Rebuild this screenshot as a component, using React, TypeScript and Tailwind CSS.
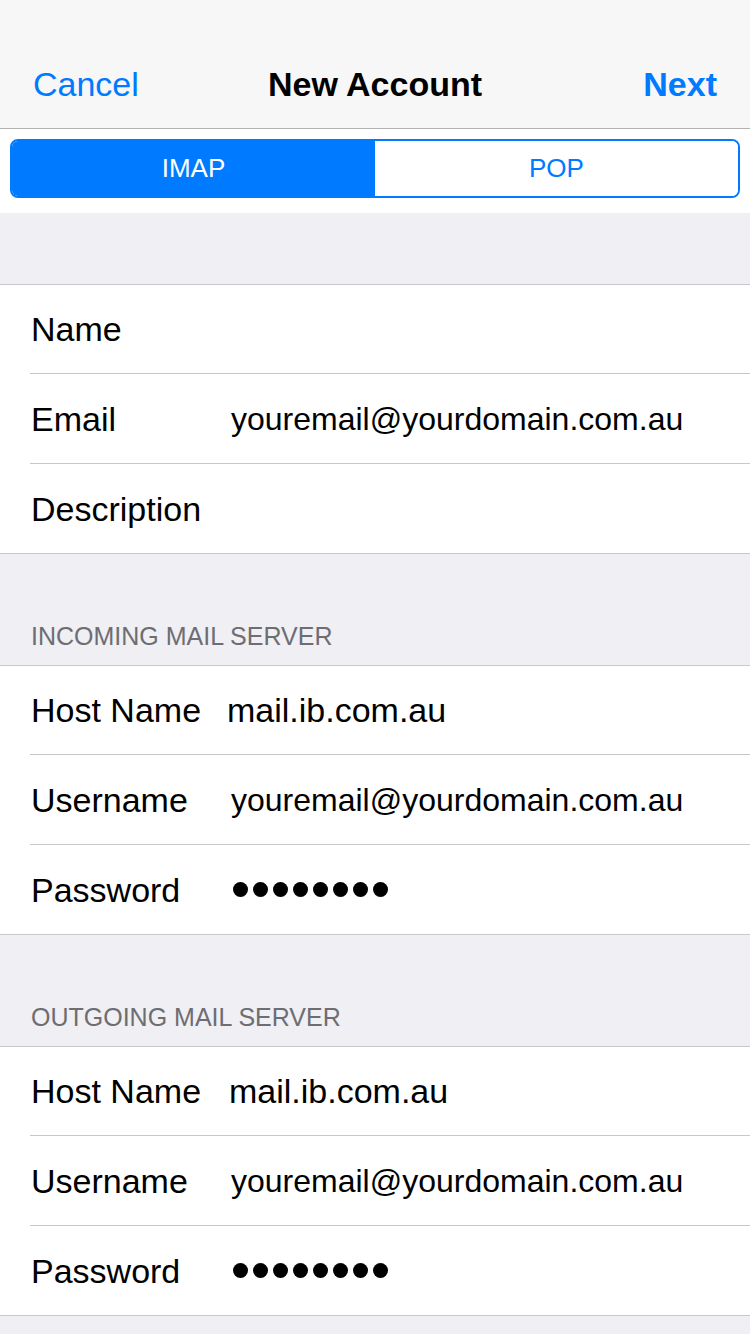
import React from "react";

const font = { fontFamily: '"Liberation Sans", Arial, sans-serif' };

function Dots() {
  return (
    <div className="flex gap-[5px]">
      {Array.from({ length: 8 }).map((_, i) => (
        <div key={i} className="w-[15px] h-[15px] rounded-full bg-black" />
      ))}
    </div>
  );
}

type Row = { label: string; value?: React.ReactNode; valueX?: number; small?: boolean };

function Group({ rows }: { rows: Row[] }) {
  return (
    <div className="bg-white border-t border-b border-[#c8c7cc]">
      {rows.map((r, i) => (
        <div key={i} className={i > 0 ? "ml-[30px] border-t border-[#c8c7cc]" : "ml-[30px]"}>
          <div className={`${i === 0 ? "h-[88px]" : "h-[89px]"} flex items-center relative`}>
            <span className="pl-[1px] text-[34px] text-black leading-none">{r.label}</span>
            {r.value !== undefined && (
              <div
                className={`absolute top-0 bottom-0 flex items-center text-black leading-none ${
                  r.small ? "text-[32px]" : "text-[34px]"
                }`}
                style={{ left: (r.valueX ?? 231) - 30 }}
              >
                {r.value}
              </div>
            )}
          </div>
        </div>
      ))}
    </div>
  );
}

function Header({ text }: { text: string }) {
  return (
    <div className="h-[111px] bg-[#efeff4] flex items-end pb-[16px] pl-[31px]">
      <span className="text-[25px] text-[#6d6d72] leading-none">{text}</span>
    </div>
  );
}

export default function App() {
  return (
    <div className="w-[750px] h-[1334px] bg-[#efeff4] overflow-hidden" style={font}>
      <div className="h-[128px] bg-[#f7f7f7] border-b border-[#b2b2b2] box-content flex items-end">
        <div className="h-[88px] w-full flex items-center justify-between relative px-[33px]">
          <span className="text-[34px] text-[#007aff] leading-none">Cancel</span>
          <span className="absolute left-0 right-0 text-center text-[34px] font-bold text-black leading-none pointer-events-none">
            New Account
          </span>
          <span className="text-[34px] font-bold text-[#007aff] leading-none">Next</span>
        </div>
      </div>
      <div className="h-[84px] bg-white pt-[10px] px-[10px]">
        <div className="h-[59px] border-2 border-[#007aff] rounded-[8px] flex overflow-hidden">
          <div className="flex-1 bg-[#007aff] flex items-center justify-center text-white text-[26px]">IMAP</div>
          <div className="flex-1 bg-white flex items-center justify-center text-[#007aff] text-[26px]">POP</div>
        </div>
      </div>
      <div className="h-[71px]" />
      <Group
        rows={[
          { label: "Name" },
          { label: "Email", value: "youremail@yourdomain.com.au", small: true },
          { label: "Description" },
        ]}
      />
      <Header text="INCOMING MAIL SERVER" />
      <Group
        rows={[
          { label: "Host Name", value: "mail.ib.com.au", valueX: 227 },
          { label: "Username", value: "youremail@yourdomain.com.au", small: true },
          { label: "Password", value: <Dots />, valueX: 233 },
        ]}
      />
      <Header text="OUTGOING MAIL SERVER" />
      <Group
        rows={[
          { label: "Host Name", value: "mail.ib.com.au", valueX: 229 },
          { label: "Username", value: "youremail@yourdomain.com.au", small: true },
          { label: "Password", value: <Dots />, valueX: 233 },
        ]}
      />
    </div>
  );
}
